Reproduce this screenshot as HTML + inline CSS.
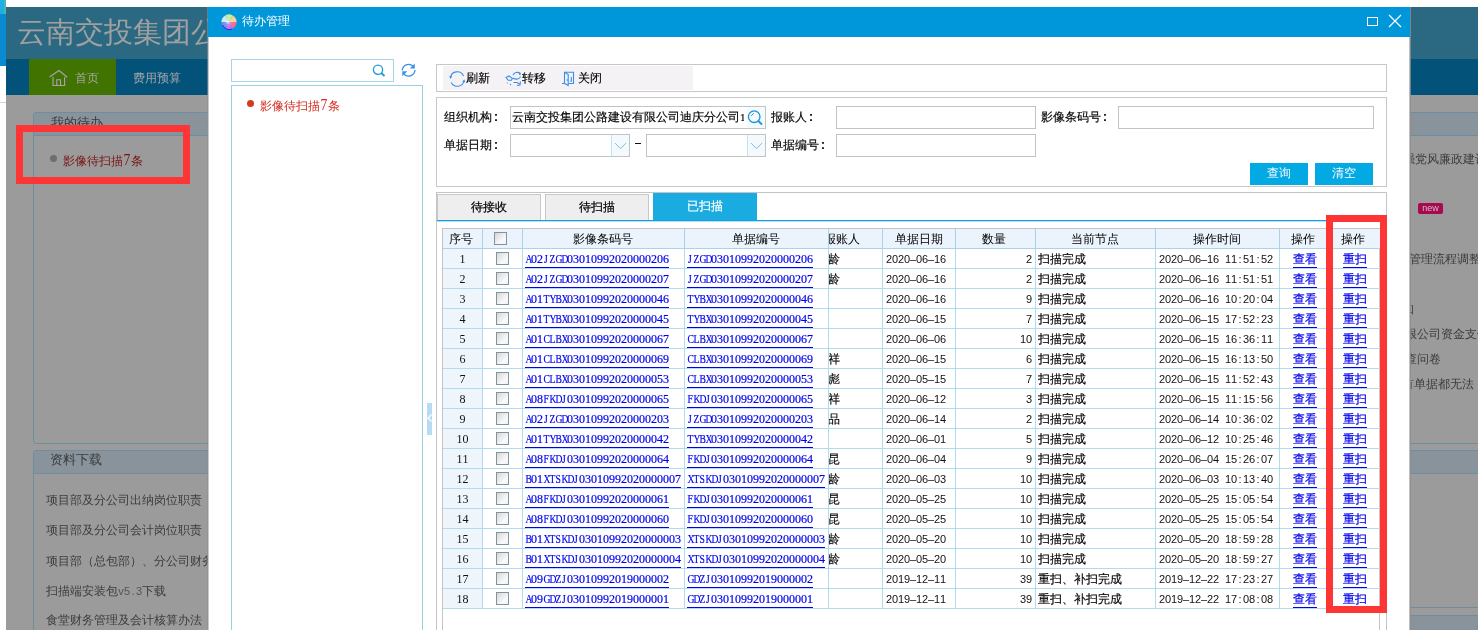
<!DOCTYPE html>
<html><head><meta charset="utf-8">
<style>
*{box-sizing:border-box}
html,body{margin:0;padding:0}
body{width:1478px;height:630px;overflow:hidden;position:relative;background:#fff;font-family:"Liberation Sans",sans-serif;font-size:12px;color:#000}
.a{position:absolute}
/* background page */
.hdr{left:6px;top:7px;width:1472px;height:52px;background:#2b6982}
.ttl{left:17px;top:12px;font-size:29px;color:#a0a0a0;white-space:nowrap;line-height:40px}
.nav{left:6px;top:59px;width:1472px;height:36px;background:#02527a}
.navg{left:29px;top:59px;width:87px;height:36px;background:#417300}
.gray{left:6px;top:95px;width:1472px;height:535px;background:#9b9b9b}
.pnl{border:1px solid #6e8da1;border-radius:3px}
.ph{left:0;top:0;right:0;height:23px;background:#89939b;border-bottom:1px solid #6e8da1;border-radius:3px 3px 0 0}
.dt{color:#3c3c3c;font-size:12px;white-space:nowrap;line-height:16px}
/* modal */
.modal{left:208px;top:7px;width:1202px;height:640px;background:#fff;border-left:1px solid #c8c8c8;border-right:1px solid #c0c0c0;box-shadow:1px 0 0 rgba(141,141,141,.8),-1px 0 0 rgba(141,141,141,.6)}
.mt{left:-1px;top:0;width:1202px;height:30px;background:#0097da}
.inp{border:1px solid #c3c3c3;background:#fff}
.lbl{white-space:nowrap;line-height:14px;font-size:12px;-webkit-text-stroke-width:0.15px}
.co{display:inline-block;width:6px;text-align:right;font-weight:bold;font-size:12px}
.btn{background:#03a9e2;color:#fff;text-align:center;line-height:20px;font-size:12px}
.tab{-webkit-text-stroke-width:0.2px;background:#eeeeee;border:1px solid #c8c8c8;border-bottom:none;text-align:center;font-size:12px;line-height:24px}
/* grid */
.grid{left:442px;top:228px;width:938px;height:420px;border-left:1px solid #c4c4c4;border-right:1px solid #c4c4c4}
.gtop{left:442px;top:228px;width:938px;height:1px;background:#c4c4c4}
.hrow{position:absolute;left:0;top:0;width:938px;height:20px;background:#ebf4fc}
.brow{position:absolute;left:0;width:938px;height:20px}
.hc,.bc{position:absolute;top:0;height:20px;border-right:1px solid #b3dbef;border-bottom:1px solid #b3dbef;white-space:nowrap;overflow:hidden;line-height:19px;font-size:12px}
.hc{text-align:center;border-color:#aad3ea;padding-right:4px;line-height:21px}
.c0{background:#eef6fc}
.hc.c0{background:transparent}
.num{text-align:center}
.c1{text-align:center}
.cb{display:inline-block;width:13px;height:13px;border:1px solid #80939e;background:linear-gradient(135deg,#d6d6d6,#fbfbfb 70%,#f0f0f0);vertical-align:top;margin-top:3px}
.ds,.cs,.ns{display:inline-block;vertical-align:top;height:19px;white-space:nowrap}
.ds i,.cs i,.ns i{display:inline-block;width:6px;text-align:center;font-style:normal;vertical-align:top}
.ds i{font-family:"Liberation Sans",sans-serif;font-size:11px;line-height:20px;color:#111}
.ns i{font-family:"Liberation Serif",serif;font-size:12px;line-height:20px;color:#111}
.cs{color:#0000f0;border-bottom:1px solid #0000f0;height:19px}
.cs i{font-family:"Liberation Serif",serif;font-size:12px;line-height:20px;height:18px;-webkit-text-stroke:0.2px #0000f0}
.cs i.w{transform:scaleX(.8)}
.lk{color:#0000f0;display:inline-block;vertical-align:top;height:19px;border-bottom:1px solid #0000f0;line-height:21px;-webkit-text-stroke:0.2px #0000f0}
.node,.pn{line-height:21px;-webkit-text-stroke-width:0.15px}
.c2,.c3,.c7{padding-left:2px}.c5,.c8{padding-left:3px}
.qty{text-align:right;padding-right:3px}
.op{text-align:center}
.pn{position:relative;left:-1px}
.red{border:7px solid #fd3535}
i.q{display:inline-block;width:6px;text-align:center;font-style:normal;font-family:"Liberation Sans",sans-serif;font-size:11px}
</style></head><body><div class="a" style="left:0;top:0;width:1478px;height:630px;overflow:hidden;will-change:transform">
<!-- left strip -->
<div class="a" style="left:0;top:0;width:4px;height:14px;background:#1eaee6"></div>
<div class="a" style="left:4px;top:0;width:2px;height:14px;background:#4fb3b0"></div>
<div class="a" style="left:0;top:14px;width:6px;height:52px;background:#0a8ad0"></div>
<div class="a" style="left:0;top:102px;width:6px;height:1px;background:#d8d8d8"></div>

<div class="a hdr"></div>
<div class="a ttl">云南交投集团公路建设有限公司</div>
<div class="a nav"></div>
<div class="a navg"></div>
<svg class="a" style="left:48px;top:69px" width="21" height="18" viewBox="0 0 21 18"><path d="M1.5 8 L11 1.5 L19.2 8.2 M5 8 V16.5 H16.6 V8 M8.8 16.5 V10.8 H12.5 V16.5" fill="none" stroke="#aaa4b0" stroke-width="1.1"/></svg>
<div class="a" style="left:75px;top:71px;color:#a6a6a6;font-size:12px;line-height:14px">首页</div>
<div class="a" style="left:133px;top:71px;color:#a6a6a6;font-size:12px;line-height:14px">费用预算</div>
<div class="a gray"></div>

<!-- left panels -->
<div class="a pnl" style="left:33px;top:112px;width:700px;height:332px"><div class="a ph"></div></div>
<div class="a" style="left:51px;top:115px;color:#3a3a3a;font-size:13px;line-height:16px">我的待办</div>
<div class="a" style="left:50px;top:155px;width:7px;height:7px;border-radius:50%;background:#6e6e6e"></div>
<div class="a" style="left:63px;top:153px;color:#7a1414;font-size:12px;line-height:16px;white-space:nowrap">影像待扫描<span style="display:inline-block;font-family:'Liberation Serif',serif;font-size:16px;line-height:10px;transform:scale(.85,1.1);transform-origin:50% 100%">7</span>条</div>

<div class="a pnl" style="left:33px;top:450px;width:700px;height:300px"><div class="a ph"></div></div>
<div class="a" style="left:50px;top:452px;color:#3a3a3a;font-size:13px;line-height:16px">资料下载</div>
<div class="a dt" style="left:46px;top:492px">项目部及分公司出纳岗位职责</div>
<div class="a dt" style="left:46px;top:522px">项目部及分公司会计岗位职责</div>
<div class="a dt" style="left:46px;top:553px">项目部（总包部）、分公司财务</div>
<div class="a dt" style="left:46px;top:583px">扫描端安装包<span style="display:inline-block;color:#4c5660"><i class="q">v</i><i class="q">5</i><i class="q">.</i><i class="q">3</i></span>下载</div>
<div class="a dt" style="left:46px;top:612px">食堂财务管理及会计核算办法</div>

<!-- right panels -->
<div class="a pnl" style="left:1000px;top:112px;width:600px;height:332px"><div class="a ph"></div></div>
<div class="a pnl" style="left:1000px;top:450px;width:600px;height:158px"><div class="a ph"></div></div>
<div class="a pnl" style="left:1000px;top:615px;width:600px;height:100px"><div class="a ph"></div></div>
<div class="a dt" style="left:1391px;top:151px">加强党风廉政建设</div>
<div class="a" style="left:1418px;top:203px;width:25px;height:11px;background:#a8094f;border-radius:2px;color:#c4c4c4;font-size:9px;line-height:11px;text-align:center">new</div>
<div class="a dt" style="left:1409px;top:251px">管理流程调整</div>
<div class="a dt" style="left:1402px;top:301px">知</div>
<div class="a dt" style="left:1393px;top:326px">有限公司资金支付</div>
<div class="a dt" style="left:1393px;top:351px">调查问卷</div>
<div class="a dt" style="left:1390px;top:376px">所有单据都无法</div>

<!-- modal -->
<div class="a modal">
  <div class="a mt"></div>
</div>
<svg class="a" style="left:221px;top:14px" width="16" height="16" viewBox="0 0 16 16"><defs><radialGradient id="gw" cx="50%" cy="50%" r="50%"><stop offset="0" stop-color="#fff" stop-opacity=".85"/><stop offset=".45" stop-color="#fff" stop-opacity=".15"/><stop offset="1" stop-color="#fff" stop-opacity="0"/></radialGradient></defs><path d="M8 8 L0.40 8.00 A7.6 7.6 0 0 1 4.20 1.42 Z" fill="#c8ecf4"/><path d="M8 8 L4.20 1.42 A7.6 7.6 0 0 1 11.80 1.42 Z" fill="#bdf0a0"/><path d="M8 8 L11.80 1.42 A7.6 7.6 0 0 1 15.60 8.00 Z" fill="#f5d590"/><path d="M8 8 L15.60 8.00 A7.6 7.6 0 0 1 11.80 14.58 Z" fill="#f26aa8"/><path d="M8 8 L11.80 14.58 A7.6 7.6 0 0 1 4.20 14.58 Z" fill="#c070f0"/><path d="M8 8 L4.20 14.58 A7.6 7.6 0 0 1 0.40 8.00 Z" fill="#7088f0"/><circle cx="7" cy="8" r="6" fill="url(#gw)"/><path d="M1.5 11 A7.4 7.4 0 0 0 11 15.2" fill="none" stroke="#2a2ae0" stroke-width="1"/></svg>
<div class="a" style="left:242px;top:13px;color:#fff;font-size:12px;line-height:16px">待办管理</div>
<div class="a" style="left:1367px;top:17px;width:11px;height:9px;border:1.5px solid #fff"></div>
<svg class="a" style="left:1388px;top:14px" width="14" height="14" viewBox="0 0 14 14"><path d="M1 1 L13 13 M13 1 L1 13" stroke="#fff" stroke-width="1.3"/></svg>

<!-- left of modal -->
<div class="a" style="left:231px;top:59px;width:163px;height:23px;border:1px solid #a8d4e6"></div>
<svg class="a" style="left:371px;top:63px" width="16" height="16" viewBox="0 0 16 16"><circle cx="7" cy="6.7" r="4.6" fill="none" stroke="#1b9bd8" stroke-width="1.3"/><path d="M10.2 10 L13.5 13" stroke="#1b9bd8" stroke-width="1.8"/></svg>
<svg class="a" style="left:400px;top:62px" width="17" height="16" viewBox="0 0 17 16"><path d="M2.2 8.5 A6.5 6.5 0 0 1 13 4" fill="none" stroke="#3b8fe8" stroke-width="1.3"/><path d="M14.8 1.6 L14.8 6.6 L9.8 6.6 Z" fill="#3b8fe8"/><path d="M15 8 A6.5 6.5 0 0 1 4 12.3" fill="none" stroke="#3b8fe8" stroke-width="1.3"/><path d="M2.3 14.3 L2.3 9.3 L7.3 9.3 Z" fill="#3b8fe8"/></svg>
<div class="a" style="left:231px;top:85px;width:192px;height:600px;border:1px solid #9ad1e2"></div>
<div class="a" style="left:247px;top:100px;width:7px;height:7px;border-radius:50%;background:#d63a1c"></div>
<div class="a" style="left:260px;top:98px;color:#d42a1f;font-size:12px;line-height:16px;white-space:nowrap">影像待扫描<span style="display:inline-block;font-family:'Liberation Serif',serif;font-size:16px;line-height:10px;transform:scale(.85,1.1);transform-origin:50% 100%">7</span>条</div>
<div class="a" style="left:427px;top:403px;width:5px;height:32px;background:#b6dcf3"></div>
<svg class="a" style="left:427px;top:413px" width="5" height="10" viewBox="0 0 5 10"><path d="M4.5 1.5 L1 5 L4.5 8.5" fill="none" stroke="#fff" stroke-width="1.2"/></svg>

<!-- toolbar -->
<div class="a" style="left:436px;top:64px;width:951px;height:28px;border:1px solid #c8c8c8"></div>
<div class="a" style="left:443px;top:66px;width:250px;height:24px;background:#f4f2f4"></div>
<svg class="a" style="left:449px;top:71px" width="17" height="17" viewBox="0 0 17 17"><g fill="none" stroke="#3a8ee8" stroke-width="1.1"><path d="M1.5 6.5 A6.8 6.8 0 0 1 14.5 5"/><path d="M15 9.5 A6.8 6.8 0 0 1 2.2 11.5"/></g><path d="M0.3 5 L3.2 5.2 L1.4 8 Z" fill="#3a8ee8"/><path d="M16.2 11.2 L13.3 11 L15.2 8.2 Z" fill="#3a8ee8"/></svg>
<div class="a lbl" style="left:466px;top:71px">刷新</div>
<svg class="a" style="left:502px;top:68px" width="22" height="20" viewBox="0 0 22 20"><g fill="none" stroke="#3a8ee8" stroke-width="1.1"><path d="M11 7 C12 4.5 16 3.5 18.5 5.5"/><path d="M18.5 8.5 C18 11 14 12 11 10"/><path d="M4 9.5 L7 8 L10.5 10.5 L9 12.5 L6 12 Z"/><path d="M11.5 14.5 L15 14.5 L17.5 16 M15 17.5 L18 17 L18.5 13.5"/></g><circle cx="17.8" cy="6" r="1" fill="#3a8ee8"/><circle cx="5.2" cy="15" r=".6" fill="#3a8ee8"/><circle cx="8.5" cy="16.5" r=".7" fill="#3a8ee8"/></svg>
<div class="a lbl" style="left:522px;top:71px">转移</div>
<svg class="a" style="left:558px;top:68px" width="20" height="20" viewBox="0 0 20 20"><g fill="none" stroke="#3a8ee8" stroke-width="1.1"><path d="M6.5 15.5 V4.2 H15.5 V15.5 H10.5"/><path d="M6.8 4.5 L10.2 6.5 V17.5 L6.8 15.5"/><path d="M4 15.5 H6.8"/><path d="M13.3 9 V13.3 H12.2"/></g><circle cx="9.3" cy="12" r=".8" fill="#3a8ee8"/></svg>
<div class="a lbl" style="left:578px;top:71px">关闭</div>

<!-- form -->
<div class="a" style="left:436px;top:97px;width:951px;height:90px;border:1px solid #c8c8c8"></div>
<div class="a lbl" style="left:444px;top:110px">组织机构<b class="co">:</b></div>
<div class="a lbl" style="left:444px;top:138px">单据日期<b class="co">:</b></div>
<div class="a lbl" style="left:771px;top:110px">报账人<b class="co">:</b></div>
<div class="a lbl" style="left:771px;top:138px">单据编号<b class="co">:</b></div>
<div class="a lbl" style="left:1041px;top:110px">影像条码号<b class="co">:</b></div>
<div class="a inp" style="left:510px;top:106px;width:256px;height:23px"></div>
<div class="a lbl" style="left:512px;top:110px;width:232px;overflow:hidden">云南交投集团公路建设有限公司迪庆分公司<span style="font-family:'Liberation Serif',serif;font-size:11px;color:#000">1</span></div>
<div class="a" style="left:747px;top:107px;width:18px;height:21px;background:#f5fafd"></div><svg class="a" style="left:746px;top:109px" width="18" height="18" viewBox="0 0 18 18"><circle cx="8.2" cy="7.7" r="5.8" fill="none" stroke="#1a93d8" stroke-width="1.3"/><path d="M12.4 12 L16 15.6" stroke="#1a93d8" stroke-width="1.9"/><path d="M5.2 6.8 L7.6 4.4" stroke="#1a93d8" stroke-width="1"/></svg>
<div class="a inp" style="left:836px;top:106px;width:200px;height:23px"></div>
<div class="a inp" style="left:1118px;top:106px;width:256px;height:23px"></div>
<div class="a inp" style="left:510px;top:134px;width:120px;height:23px"></div>
<div class="a" style="left:611px;top:135px;width:18px;height:21px;background:#f4f9fd;border-left:1px solid #bfe4f8"></div>
<svg class="a" style="left:613px;top:140px" width="14" height="10" viewBox="0 0 14 10"><path d="M2 3.1 L7.5 8.7 L13 3.1" fill="none" stroke="#7dbcd8" stroke-width="1"/></svg>
<div class="a" style="left:635px;top:143px;width:6px;height:1px;background:#111"></div>
<div class="a inp" style="left:646px;top:134px;width:120px;height:23px"></div>
<div class="a" style="left:747px;top:135px;width:18px;height:21px;background:#f4f9fd;border-left:1px solid #bfe4f8"></div>
<svg class="a" style="left:749px;top:140px" width="14" height="10" viewBox="0 0 14 10"><path d="M2 3.1 L7.5 8.7 L13 3.1" fill="none" stroke="#7dbcd8" stroke-width="1"/></svg>
<div class="a inp" style="left:836px;top:134px;width:200px;height:23px"></div>
<div class="a btn" style="left:1250px;top:163px;width:58px;height:22px">查询</div>
<div class="a btn" style="left:1315px;top:163px;width:58px;height:22px">清空</div>

<!-- tabs -->
<div class="a" style="left:436px;top:192px;width:951px;height:1px;background:#c4c4c4"></div>
<div class="a" style="left:436px;top:192px;width:1px;height:460px;background:#c4c4c4"></div>
<div class="a" style="left:1386px;top:192px;width:1px;height:460px;background:#c4c4c4"></div>
<div class="a tab" style="left:437px;top:194px;width:104px;height:26px">待接收</div>
<div class="a tab" style="left:545px;top:194px;width:104px;height:26px">待扫描</div>
<div class="a tab" style="left:653px;top:193px;width:104px;height:27px;background:#1aabe1;border:none;color:#fff;line-height:26px">已扫描</div>
<div class="a" style="left:437px;top:220px;width:949px;height:1px;background:#14a0dc"></div><div class="a" style="left:437px;top:221px;width:949px;height:1px;background:#b5e2f6"></div>

<!-- grid -->
<div class="a grid"></div>
<div class="a gtop"></div>
<div class="a" style="left:443px;top:229px;width:937px;height:400px;overflow:hidden">
<div class="hrow"><div class="hc c0" style="left:0px;width:40px">序号</div><div class="hc c1" style="left:40px;width:40px"><span class="cb"></span></div><div class="hc c2" style="left:80px;width:162px">影像条码号</div><div class="hc c3" style="left:242px;width:144px">单据编号</div><div class="hc c4" style="left:386px;width:54px"><span style="position:absolute;left:-5px;top:0">报账人</span></div><div class="hc c5" style="left:440px;width:73px">单据日期</div><div class="hc c6" style="left:513px;width:80px">数量</div><div class="hc c7" style="left:593px;width:120px">当前节点</div><div class="hc c8" style="left:713px;width:124px">操作时间</div><div class="hc c9" style="left:837px;width:50px">操作</div><div class="hc c10" style="left:887px;width:51px">操作</div></div>
<div class="brow" style="top:20px"><div class="bc c0 num" style="left:0px;width:40px"><span class="ns"><i>1</i></span></div><div class="bc c1" style="left:40px;width:40px"><span class="cb"></span></div><div class="bc c2" style="left:80px;width:162px"><span class="cs"><i class="w">A</i><i>0</i><i>2</i><i class="w">J</i><i class="w">Z</i><i class="w">G</i><i class="w">D</i><i>0</i><i>3</i><i>0</i><i>1</i><i>0</i><i>9</i><i>9</i><i>2</i><i>0</i><i>2</i><i>0</i><i>0</i><i>0</i><i>0</i><i>2</i><i>0</i><i>6</i></span></div><div class="bc c3" style="left:242px;width:144px"><span class="cs"><i class="w">J</i><i class="w">Z</i><i class="w">G</i><i class="w">D</i><i>0</i><i>3</i><i>0</i><i>1</i><i>0</i><i>9</i><i>9</i><i>2</i><i>0</i><i>2</i><i>0</i><i>0</i><i>0</i><i>0</i><i>2</i><i>0</i><i>6</i></span></div><div class="bc c4" style="left:386px;width:54px"><span class="pn">龄</span></div><div class="bc c5" style="left:440px;width:73px"><span class="ds"><i>2</i><i>0</i><i>2</i><i>0</i><i>&ndash;</i><i>0</i><i>6</i><i>&ndash;</i><i>1</i><i>6</i></span></div><div class="bc c6 qty" style="left:513px;width:80px"><span class="ds"><i>2</i></span></div><div class="bc c7 node" style="left:593px;width:120px">扫描完成</div><div class="bc c8" style="left:713px;width:124px"><span class="ds"><i>2</i><i>0</i><i>2</i><i>0</i><i>&ndash;</i><i>0</i><i>6</i><i>&ndash;</i><i>1</i><i>6</i><i>&nbsp;</i><i>1</i><i>1</i><i>:</i><i>5</i><i>1</i><i>:</i><i>5</i><i>2</i></span></div><div class="bc c9 op" style="left:837px;width:50px"><span class="lk">查看</span></div><div class="bc c10 op" style="left:887px;width:51px"><span class="lk">重扫</span></div></div>
<div class="brow" style="top:40px"><div class="bc c0 num" style="left:0px;width:40px"><span class="ns"><i>2</i></span></div><div class="bc c1" style="left:40px;width:40px"><span class="cb"></span></div><div class="bc c2" style="left:80px;width:162px"><span class="cs"><i class="w">A</i><i>0</i><i>2</i><i class="w">J</i><i class="w">Z</i><i class="w">G</i><i class="w">D</i><i>0</i><i>3</i><i>0</i><i>1</i><i>0</i><i>9</i><i>9</i><i>2</i><i>0</i><i>2</i><i>0</i><i>0</i><i>0</i><i>0</i><i>2</i><i>0</i><i>7</i></span></div><div class="bc c3" style="left:242px;width:144px"><span class="cs"><i class="w">J</i><i class="w">Z</i><i class="w">G</i><i class="w">D</i><i>0</i><i>3</i><i>0</i><i>1</i><i>0</i><i>9</i><i>9</i><i>2</i><i>0</i><i>2</i><i>0</i><i>0</i><i>0</i><i>0</i><i>2</i><i>0</i><i>7</i></span></div><div class="bc c4" style="left:386px;width:54px"><span class="pn">龄</span></div><div class="bc c5" style="left:440px;width:73px"><span class="ds"><i>2</i><i>0</i><i>2</i><i>0</i><i>&ndash;</i><i>0</i><i>6</i><i>&ndash;</i><i>1</i><i>6</i></span></div><div class="bc c6 qty" style="left:513px;width:80px"><span class="ds"><i>2</i></span></div><div class="bc c7 node" style="left:593px;width:120px">扫描完成</div><div class="bc c8" style="left:713px;width:124px"><span class="ds"><i>2</i><i>0</i><i>2</i><i>0</i><i>&ndash;</i><i>0</i><i>6</i><i>&ndash;</i><i>1</i><i>6</i><i>&nbsp;</i><i>1</i><i>1</i><i>:</i><i>5</i><i>1</i><i>:</i><i>5</i><i>1</i></span></div><div class="bc c9 op" style="left:837px;width:50px"><span class="lk">查看</span></div><div class="bc c10 op" style="left:887px;width:51px"><span class="lk">重扫</span></div></div>
<div class="brow" style="top:60px"><div class="bc c0 num" style="left:0px;width:40px"><span class="ns"><i>3</i></span></div><div class="bc c1" style="left:40px;width:40px"><span class="cb"></span></div><div class="bc c2" style="left:80px;width:162px"><span class="cs"><i class="w">A</i><i>0</i><i>1</i><i class="w">T</i><i class="w">Y</i><i class="w">B</i><i class="w">X</i><i>0</i><i>3</i><i>0</i><i>1</i><i>0</i><i>9</i><i>9</i><i>2</i><i>0</i><i>2</i><i>0</i><i>0</i><i>0</i><i>0</i><i>0</i><i>4</i><i>6</i></span></div><div class="bc c3" style="left:242px;width:144px"><span class="cs"><i class="w">T</i><i class="w">Y</i><i class="w">B</i><i class="w">X</i><i>0</i><i>3</i><i>0</i><i>1</i><i>0</i><i>9</i><i>9</i><i>2</i><i>0</i><i>2</i><i>0</i><i>0</i><i>0</i><i>0</i><i>0</i><i>4</i><i>6</i></span></div><div class="bc c4" style="left:386px;width:54px"><span class="pn"></span></div><div class="bc c5" style="left:440px;width:73px"><span class="ds"><i>2</i><i>0</i><i>2</i><i>0</i><i>&ndash;</i><i>0</i><i>6</i><i>&ndash;</i><i>1</i><i>6</i></span></div><div class="bc c6 qty" style="left:513px;width:80px"><span class="ds"><i>9</i></span></div><div class="bc c7 node" style="left:593px;width:120px">扫描完成</div><div class="bc c8" style="left:713px;width:124px"><span class="ds"><i>2</i><i>0</i><i>2</i><i>0</i><i>&ndash;</i><i>0</i><i>6</i><i>&ndash;</i><i>1</i><i>6</i><i>&nbsp;</i><i>1</i><i>0</i><i>:</i><i>2</i><i>0</i><i>:</i><i>0</i><i>4</i></span></div><div class="bc c9 op" style="left:837px;width:50px"><span class="lk">查看</span></div><div class="bc c10 op" style="left:887px;width:51px"><span class="lk">重扫</span></div></div>
<div class="brow" style="top:80px"><div class="bc c0 num" style="left:0px;width:40px"><span class="ns"><i>4</i></span></div><div class="bc c1" style="left:40px;width:40px"><span class="cb"></span></div><div class="bc c2" style="left:80px;width:162px"><span class="cs"><i class="w">A</i><i>0</i><i>1</i><i class="w">T</i><i class="w">Y</i><i class="w">B</i><i class="w">X</i><i>0</i><i>3</i><i>0</i><i>1</i><i>0</i><i>9</i><i>9</i><i>2</i><i>0</i><i>2</i><i>0</i><i>0</i><i>0</i><i>0</i><i>0</i><i>4</i><i>5</i></span></div><div class="bc c3" style="left:242px;width:144px"><span class="cs"><i class="w">T</i><i class="w">Y</i><i class="w">B</i><i class="w">X</i><i>0</i><i>3</i><i>0</i><i>1</i><i>0</i><i>9</i><i>9</i><i>2</i><i>0</i><i>2</i><i>0</i><i>0</i><i>0</i><i>0</i><i>0</i><i>4</i><i>5</i></span></div><div class="bc c4" style="left:386px;width:54px"><span class="pn"></span></div><div class="bc c5" style="left:440px;width:73px"><span class="ds"><i>2</i><i>0</i><i>2</i><i>0</i><i>&ndash;</i><i>0</i><i>6</i><i>&ndash;</i><i>1</i><i>5</i></span></div><div class="bc c6 qty" style="left:513px;width:80px"><span class="ds"><i>7</i></span></div><div class="bc c7 node" style="left:593px;width:120px">扫描完成</div><div class="bc c8" style="left:713px;width:124px"><span class="ds"><i>2</i><i>0</i><i>2</i><i>0</i><i>&ndash;</i><i>0</i><i>6</i><i>&ndash;</i><i>1</i><i>5</i><i>&nbsp;</i><i>1</i><i>7</i><i>:</i><i>5</i><i>2</i><i>:</i><i>2</i><i>3</i></span></div><div class="bc c9 op" style="left:837px;width:50px"><span class="lk">查看</span></div><div class="bc c10 op" style="left:887px;width:51px"><span class="lk">重扫</span></div></div>
<div class="brow" style="top:100px"><div class="bc c0 num" style="left:0px;width:40px"><span class="ns"><i>5</i></span></div><div class="bc c1" style="left:40px;width:40px"><span class="cb"></span></div><div class="bc c2" style="left:80px;width:162px"><span class="cs"><i class="w">A</i><i>0</i><i>1</i><i class="w">C</i><i class="w">L</i><i class="w">B</i><i class="w">X</i><i>0</i><i>3</i><i>0</i><i>1</i><i>0</i><i>9</i><i>9</i><i>2</i><i>0</i><i>2</i><i>0</i><i>0</i><i>0</i><i>0</i><i>0</i><i>6</i><i>7</i></span></div><div class="bc c3" style="left:242px;width:144px"><span class="cs"><i class="w">C</i><i class="w">L</i><i class="w">B</i><i class="w">X</i><i>0</i><i>3</i><i>0</i><i>1</i><i>0</i><i>9</i><i>9</i><i>2</i><i>0</i><i>2</i><i>0</i><i>0</i><i>0</i><i>0</i><i>0</i><i>6</i><i>7</i></span></div><div class="bc c4" style="left:386px;width:54px"><span class="pn"></span></div><div class="bc c5" style="left:440px;width:73px"><span class="ds"><i>2</i><i>0</i><i>2</i><i>0</i><i>&ndash;</i><i>0</i><i>6</i><i>&ndash;</i><i>0</i><i>6</i></span></div><div class="bc c6 qty" style="left:513px;width:80px"><span class="ds"><i>1</i><i>0</i></span></div><div class="bc c7 node" style="left:593px;width:120px">扫描完成</div><div class="bc c8" style="left:713px;width:124px"><span class="ds"><i>2</i><i>0</i><i>2</i><i>0</i><i>&ndash;</i><i>0</i><i>6</i><i>&ndash;</i><i>1</i><i>5</i><i>&nbsp;</i><i>1</i><i>6</i><i>:</i><i>3</i><i>6</i><i>:</i><i>1</i><i>1</i></span></div><div class="bc c9 op" style="left:837px;width:50px"><span class="lk">查看</span></div><div class="bc c10 op" style="left:887px;width:51px"><span class="lk">重扫</span></div></div>
<div class="brow" style="top:120px"><div class="bc c0 num" style="left:0px;width:40px"><span class="ns"><i>6</i></span></div><div class="bc c1" style="left:40px;width:40px"><span class="cb"></span></div><div class="bc c2" style="left:80px;width:162px"><span class="cs"><i class="w">A</i><i>0</i><i>1</i><i class="w">C</i><i class="w">L</i><i class="w">B</i><i class="w">X</i><i>0</i><i>3</i><i>0</i><i>1</i><i>0</i><i>9</i><i>9</i><i>2</i><i>0</i><i>2</i><i>0</i><i>0</i><i>0</i><i>0</i><i>0</i><i>6</i><i>9</i></span></div><div class="bc c3" style="left:242px;width:144px"><span class="cs"><i class="w">C</i><i class="w">L</i><i class="w">B</i><i class="w">X</i><i>0</i><i>3</i><i>0</i><i>1</i><i>0</i><i>9</i><i>9</i><i>2</i><i>0</i><i>2</i><i>0</i><i>0</i><i>0</i><i>0</i><i>0</i><i>6</i><i>9</i></span></div><div class="bc c4" style="left:386px;width:54px"><span class="pn">祥</span></div><div class="bc c5" style="left:440px;width:73px"><span class="ds"><i>2</i><i>0</i><i>2</i><i>0</i><i>&ndash;</i><i>0</i><i>6</i><i>&ndash;</i><i>1</i><i>5</i></span></div><div class="bc c6 qty" style="left:513px;width:80px"><span class="ds"><i>6</i></span></div><div class="bc c7 node" style="left:593px;width:120px">扫描完成</div><div class="bc c8" style="left:713px;width:124px"><span class="ds"><i>2</i><i>0</i><i>2</i><i>0</i><i>&ndash;</i><i>0</i><i>6</i><i>&ndash;</i><i>1</i><i>5</i><i>&nbsp;</i><i>1</i><i>6</i><i>:</i><i>1</i><i>3</i><i>:</i><i>5</i><i>0</i></span></div><div class="bc c9 op" style="left:837px;width:50px"><span class="lk">查看</span></div><div class="bc c10 op" style="left:887px;width:51px"><span class="lk">重扫</span></div></div>
<div class="brow" style="top:140px"><div class="bc c0 num" style="left:0px;width:40px"><span class="ns"><i>7</i></span></div><div class="bc c1" style="left:40px;width:40px"><span class="cb"></span></div><div class="bc c2" style="left:80px;width:162px"><span class="cs"><i class="w">A</i><i>0</i><i>1</i><i class="w">C</i><i class="w">L</i><i class="w">B</i><i class="w">X</i><i>0</i><i>3</i><i>0</i><i>1</i><i>0</i><i>9</i><i>9</i><i>2</i><i>0</i><i>2</i><i>0</i><i>0</i><i>0</i><i>0</i><i>0</i><i>5</i><i>3</i></span></div><div class="bc c3" style="left:242px;width:144px"><span class="cs"><i class="w">C</i><i class="w">L</i><i class="w">B</i><i class="w">X</i><i>0</i><i>3</i><i>0</i><i>1</i><i>0</i><i>9</i><i>9</i><i>2</i><i>0</i><i>2</i><i>0</i><i>0</i><i>0</i><i>0</i><i>0</i><i>5</i><i>3</i></span></div><div class="bc c4" style="left:386px;width:54px"><span class="pn">彪</span></div><div class="bc c5" style="left:440px;width:73px"><span class="ds"><i>2</i><i>0</i><i>2</i><i>0</i><i>&ndash;</i><i>0</i><i>5</i><i>&ndash;</i><i>1</i><i>5</i></span></div><div class="bc c6 qty" style="left:513px;width:80px"><span class="ds"><i>7</i></span></div><div class="bc c7 node" style="left:593px;width:120px">扫描完成</div><div class="bc c8" style="left:713px;width:124px"><span class="ds"><i>2</i><i>0</i><i>2</i><i>0</i><i>&ndash;</i><i>0</i><i>6</i><i>&ndash;</i><i>1</i><i>5</i><i>&nbsp;</i><i>1</i><i>1</i><i>:</i><i>5</i><i>2</i><i>:</i><i>4</i><i>3</i></span></div><div class="bc c9 op" style="left:837px;width:50px"><span class="lk">查看</span></div><div class="bc c10 op" style="left:887px;width:51px"><span class="lk">重扫</span></div></div>
<div class="brow" style="top:160px"><div class="bc c0 num" style="left:0px;width:40px"><span class="ns"><i>8</i></span></div><div class="bc c1" style="left:40px;width:40px"><span class="cb"></span></div><div class="bc c2" style="left:80px;width:162px"><span class="cs"><i class="w">A</i><i>0</i><i>8</i><i class="w">F</i><i class="w">K</i><i class="w">D</i><i class="w">J</i><i>0</i><i>3</i><i>0</i><i>1</i><i>0</i><i>9</i><i>9</i><i>2</i><i>0</i><i>2</i><i>0</i><i>0</i><i>0</i><i>0</i><i>0</i><i>6</i><i>5</i></span></div><div class="bc c3" style="left:242px;width:144px"><span class="cs"><i class="w">F</i><i class="w">K</i><i class="w">D</i><i class="w">J</i><i>0</i><i>3</i><i>0</i><i>1</i><i>0</i><i>9</i><i>9</i><i>2</i><i>0</i><i>2</i><i>0</i><i>0</i><i>0</i><i>0</i><i>0</i><i>6</i><i>5</i></span></div><div class="bc c4" style="left:386px;width:54px"><span class="pn">祥</span></div><div class="bc c5" style="left:440px;width:73px"><span class="ds"><i>2</i><i>0</i><i>2</i><i>0</i><i>&ndash;</i><i>0</i><i>6</i><i>&ndash;</i><i>1</i><i>2</i></span></div><div class="bc c6 qty" style="left:513px;width:80px"><span class="ds"><i>3</i></span></div><div class="bc c7 node" style="left:593px;width:120px">扫描完成</div><div class="bc c8" style="left:713px;width:124px"><span class="ds"><i>2</i><i>0</i><i>2</i><i>0</i><i>&ndash;</i><i>0</i><i>6</i><i>&ndash;</i><i>1</i><i>5</i><i>&nbsp;</i><i>1</i><i>1</i><i>:</i><i>1</i><i>5</i><i>:</i><i>5</i><i>6</i></span></div><div class="bc c9 op" style="left:837px;width:50px"><span class="lk">查看</span></div><div class="bc c10 op" style="left:887px;width:51px"><span class="lk">重扫</span></div></div>
<div class="brow" style="top:180px"><div class="bc c0 num" style="left:0px;width:40px"><span class="ns"><i>9</i></span></div><div class="bc c1" style="left:40px;width:40px"><span class="cb"></span></div><div class="bc c2" style="left:80px;width:162px"><span class="cs"><i class="w">A</i><i>0</i><i>2</i><i class="w">J</i><i class="w">Z</i><i class="w">G</i><i class="w">D</i><i>0</i><i>3</i><i>0</i><i>1</i><i>0</i><i>9</i><i>9</i><i>2</i><i>0</i><i>2</i><i>0</i><i>0</i><i>0</i><i>0</i><i>2</i><i>0</i><i>3</i></span></div><div class="bc c3" style="left:242px;width:144px"><span class="cs"><i class="w">J</i><i class="w">Z</i><i class="w">G</i><i class="w">D</i><i>0</i><i>3</i><i>0</i><i>1</i><i>0</i><i>9</i><i>9</i><i>2</i><i>0</i><i>2</i><i>0</i><i>0</i><i>0</i><i>0</i><i>2</i><i>0</i><i>3</i></span></div><div class="bc c4" style="left:386px;width:54px"><span class="pn">品</span></div><div class="bc c5" style="left:440px;width:73px"><span class="ds"><i>2</i><i>0</i><i>2</i><i>0</i><i>&ndash;</i><i>0</i><i>6</i><i>&ndash;</i><i>1</i><i>4</i></span></div><div class="bc c6 qty" style="left:513px;width:80px"><span class="ds"><i>2</i></span></div><div class="bc c7 node" style="left:593px;width:120px">扫描完成</div><div class="bc c8" style="left:713px;width:124px"><span class="ds"><i>2</i><i>0</i><i>2</i><i>0</i><i>&ndash;</i><i>0</i><i>6</i><i>&ndash;</i><i>1</i><i>4</i><i>&nbsp;</i><i>1</i><i>0</i><i>:</i><i>3</i><i>6</i><i>:</i><i>0</i><i>2</i></span></div><div class="bc c9 op" style="left:837px;width:50px"><span class="lk">查看</span></div><div class="bc c10 op" style="left:887px;width:51px"><span class="lk">重扫</span></div></div>
<div class="brow" style="top:200px"><div class="bc c0 num" style="left:0px;width:40px"><span class="ns"><i>1</i><i>0</i></span></div><div class="bc c1" style="left:40px;width:40px"><span class="cb"></span></div><div class="bc c2" style="left:80px;width:162px"><span class="cs"><i class="w">A</i><i>0</i><i>1</i><i class="w">T</i><i class="w">Y</i><i class="w">B</i><i class="w">X</i><i>0</i><i>3</i><i>0</i><i>1</i><i>0</i><i>9</i><i>9</i><i>2</i><i>0</i><i>2</i><i>0</i><i>0</i><i>0</i><i>0</i><i>0</i><i>4</i><i>2</i></span></div><div class="bc c3" style="left:242px;width:144px"><span class="cs"><i class="w">T</i><i class="w">Y</i><i class="w">B</i><i class="w">X</i><i>0</i><i>3</i><i>0</i><i>1</i><i>0</i><i>9</i><i>9</i><i>2</i><i>0</i><i>2</i><i>0</i><i>0</i><i>0</i><i>0</i><i>0</i><i>4</i><i>2</i></span></div><div class="bc c4" style="left:386px;width:54px"><span class="pn"></span></div><div class="bc c5" style="left:440px;width:73px"><span class="ds"><i>2</i><i>0</i><i>2</i><i>0</i><i>&ndash;</i><i>0</i><i>6</i><i>&ndash;</i><i>0</i><i>1</i></span></div><div class="bc c6 qty" style="left:513px;width:80px"><span class="ds"><i>5</i></span></div><div class="bc c7 node" style="left:593px;width:120px">扫描完成</div><div class="bc c8" style="left:713px;width:124px"><span class="ds"><i>2</i><i>0</i><i>2</i><i>0</i><i>&ndash;</i><i>0</i><i>6</i><i>&ndash;</i><i>1</i><i>2</i><i>&nbsp;</i><i>1</i><i>0</i><i>:</i><i>2</i><i>5</i><i>:</i><i>4</i><i>6</i></span></div><div class="bc c9 op" style="left:837px;width:50px"><span class="lk">查看</span></div><div class="bc c10 op" style="left:887px;width:51px"><span class="lk">重扫</span></div></div>
<div class="brow" style="top:220px"><div class="bc c0 num" style="left:0px;width:40px"><span class="ns"><i>1</i><i>1</i></span></div><div class="bc c1" style="left:40px;width:40px"><span class="cb"></span></div><div class="bc c2" style="left:80px;width:162px"><span class="cs"><i class="w">A</i><i>0</i><i>8</i><i class="w">F</i><i class="w">K</i><i class="w">D</i><i class="w">J</i><i>0</i><i>3</i><i>0</i><i>1</i><i>0</i><i>9</i><i>9</i><i>2</i><i>0</i><i>2</i><i>0</i><i>0</i><i>0</i><i>0</i><i>0</i><i>6</i><i>4</i></span></div><div class="bc c3" style="left:242px;width:144px"><span class="cs"><i class="w">F</i><i class="w">K</i><i class="w">D</i><i class="w">J</i><i>0</i><i>3</i><i>0</i><i>1</i><i>0</i><i>9</i><i>9</i><i>2</i><i>0</i><i>2</i><i>0</i><i>0</i><i>0</i><i>0</i><i>0</i><i>6</i><i>4</i></span></div><div class="bc c4" style="left:386px;width:54px"><span class="pn">昆</span></div><div class="bc c5" style="left:440px;width:73px"><span class="ds"><i>2</i><i>0</i><i>2</i><i>0</i><i>&ndash;</i><i>0</i><i>6</i><i>&ndash;</i><i>0</i><i>4</i></span></div><div class="bc c6 qty" style="left:513px;width:80px"><span class="ds"><i>9</i></span></div><div class="bc c7 node" style="left:593px;width:120px">扫描完成</div><div class="bc c8" style="left:713px;width:124px"><span class="ds"><i>2</i><i>0</i><i>2</i><i>0</i><i>&ndash;</i><i>0</i><i>6</i><i>&ndash;</i><i>0</i><i>4</i><i>&nbsp;</i><i>1</i><i>5</i><i>:</i><i>2</i><i>6</i><i>:</i><i>0</i><i>7</i></span></div><div class="bc c9 op" style="left:837px;width:50px"><span class="lk">查看</span></div><div class="bc c10 op" style="left:887px;width:51px"><span class="lk">重扫</span></div></div>
<div class="brow" style="top:240px"><div class="bc c0 num" style="left:0px;width:40px"><span class="ns"><i>1</i><i>2</i></span></div><div class="bc c1" style="left:40px;width:40px"><span class="cb"></span></div><div class="bc c2" style="left:80px;width:162px"><span class="cs"><i class="w">B</i><i>0</i><i>1</i><i class="w">X</i><i class="w">T</i><i class="w">S</i><i class="w">K</i><i class="w">D</i><i class="w">J</i><i>0</i><i>3</i><i>0</i><i>1</i><i>0</i><i>9</i><i>9</i><i>2</i><i>0</i><i>2</i><i>0</i><i>0</i><i>0</i><i>0</i><i>0</i><i>0</i><i>7</i></span></div><div class="bc c3" style="left:242px;width:144px"><span class="cs"><i class="w">X</i><i class="w">T</i><i class="w">S</i><i class="w">K</i><i class="w">D</i><i class="w">J</i><i>0</i><i>3</i><i>0</i><i>1</i><i>0</i><i>9</i><i>9</i><i>2</i><i>0</i><i>2</i><i>0</i><i>0</i><i>0</i><i>0</i><i>0</i><i>0</i><i>7</i></span></div><div class="bc c4" style="left:386px;width:54px"><span class="pn">龄</span></div><div class="bc c5" style="left:440px;width:73px"><span class="ds"><i>2</i><i>0</i><i>2</i><i>0</i><i>&ndash;</i><i>0</i><i>6</i><i>&ndash;</i><i>0</i><i>3</i></span></div><div class="bc c6 qty" style="left:513px;width:80px"><span class="ds"><i>1</i><i>0</i></span></div><div class="bc c7 node" style="left:593px;width:120px">扫描完成</div><div class="bc c8" style="left:713px;width:124px"><span class="ds"><i>2</i><i>0</i><i>2</i><i>0</i><i>&ndash;</i><i>0</i><i>6</i><i>&ndash;</i><i>0</i><i>3</i><i>&nbsp;</i><i>1</i><i>0</i><i>:</i><i>1</i><i>3</i><i>:</i><i>4</i><i>0</i></span></div><div class="bc c9 op" style="left:837px;width:50px"><span class="lk">查看</span></div><div class="bc c10 op" style="left:887px;width:51px"><span class="lk">重扫</span></div></div>
<div class="brow" style="top:260px"><div class="bc c0 num" style="left:0px;width:40px"><span class="ns"><i>1</i><i>3</i></span></div><div class="bc c1" style="left:40px;width:40px"><span class="cb"></span></div><div class="bc c2" style="left:80px;width:162px"><span class="cs"><i class="w">A</i><i>0</i><i>8</i><i class="w">F</i><i class="w">K</i><i class="w">D</i><i class="w">J</i><i>0</i><i>3</i><i>0</i><i>1</i><i>0</i><i>9</i><i>9</i><i>2</i><i>0</i><i>2</i><i>0</i><i>0</i><i>0</i><i>0</i><i>0</i><i>6</i><i>1</i></span></div><div class="bc c3" style="left:242px;width:144px"><span class="cs"><i class="w">F</i><i class="w">K</i><i class="w">D</i><i class="w">J</i><i>0</i><i>3</i><i>0</i><i>1</i><i>0</i><i>9</i><i>9</i><i>2</i><i>0</i><i>2</i><i>0</i><i>0</i><i>0</i><i>0</i><i>0</i><i>6</i><i>1</i></span></div><div class="bc c4" style="left:386px;width:54px"><span class="pn">昆</span></div><div class="bc c5" style="left:440px;width:73px"><span class="ds"><i>2</i><i>0</i><i>2</i><i>0</i><i>&ndash;</i><i>0</i><i>5</i><i>&ndash;</i><i>2</i><i>5</i></span></div><div class="bc c6 qty" style="left:513px;width:80px"><span class="ds"><i>1</i><i>0</i></span></div><div class="bc c7 node" style="left:593px;width:120px">扫描完成</div><div class="bc c8" style="left:713px;width:124px"><span class="ds"><i>2</i><i>0</i><i>2</i><i>0</i><i>&ndash;</i><i>0</i><i>5</i><i>&ndash;</i><i>2</i><i>5</i><i>&nbsp;</i><i>1</i><i>5</i><i>:</i><i>0</i><i>5</i><i>:</i><i>5</i><i>4</i></span></div><div class="bc c9 op" style="left:837px;width:50px"><span class="lk">查看</span></div><div class="bc c10 op" style="left:887px;width:51px"><span class="lk">重扫</span></div></div>
<div class="brow" style="top:280px"><div class="bc c0 num" style="left:0px;width:40px"><span class="ns"><i>1</i><i>4</i></span></div><div class="bc c1" style="left:40px;width:40px"><span class="cb"></span></div><div class="bc c2" style="left:80px;width:162px"><span class="cs"><i class="w">A</i><i>0</i><i>8</i><i class="w">F</i><i class="w">K</i><i class="w">D</i><i class="w">J</i><i>0</i><i>3</i><i>0</i><i>1</i><i>0</i><i>9</i><i>9</i><i>2</i><i>0</i><i>2</i><i>0</i><i>0</i><i>0</i><i>0</i><i>0</i><i>6</i><i>0</i></span></div><div class="bc c3" style="left:242px;width:144px"><span class="cs"><i class="w">F</i><i class="w">K</i><i class="w">D</i><i class="w">J</i><i>0</i><i>3</i><i>0</i><i>1</i><i>0</i><i>9</i><i>9</i><i>2</i><i>0</i><i>2</i><i>0</i><i>0</i><i>0</i><i>0</i><i>0</i><i>6</i><i>0</i></span></div><div class="bc c4" style="left:386px;width:54px"><span class="pn">昆</span></div><div class="bc c5" style="left:440px;width:73px"><span class="ds"><i>2</i><i>0</i><i>2</i><i>0</i><i>&ndash;</i><i>0</i><i>5</i><i>&ndash;</i><i>2</i><i>5</i></span></div><div class="bc c6 qty" style="left:513px;width:80px"><span class="ds"><i>1</i><i>0</i></span></div><div class="bc c7 node" style="left:593px;width:120px">扫描完成</div><div class="bc c8" style="left:713px;width:124px"><span class="ds"><i>2</i><i>0</i><i>2</i><i>0</i><i>&ndash;</i><i>0</i><i>5</i><i>&ndash;</i><i>2</i><i>5</i><i>&nbsp;</i><i>1</i><i>5</i><i>:</i><i>0</i><i>5</i><i>:</i><i>5</i><i>4</i></span></div><div class="bc c9 op" style="left:837px;width:50px"><span class="lk">查看</span></div><div class="bc c10 op" style="left:887px;width:51px"><span class="lk">重扫</span></div></div>
<div class="brow" style="top:300px"><div class="bc c0 num" style="left:0px;width:40px"><span class="ns"><i>1</i><i>5</i></span></div><div class="bc c1" style="left:40px;width:40px"><span class="cb"></span></div><div class="bc c2" style="left:80px;width:162px"><span class="cs"><i class="w">B</i><i>0</i><i>1</i><i class="w">X</i><i class="w">T</i><i class="w">S</i><i class="w">K</i><i class="w">D</i><i class="w">J</i><i>0</i><i>3</i><i>0</i><i>1</i><i>0</i><i>9</i><i>9</i><i>2</i><i>0</i><i>2</i><i>0</i><i>0</i><i>0</i><i>0</i><i>0</i><i>0</i><i>3</i></span></div><div class="bc c3" style="left:242px;width:144px"><span class="cs"><i class="w">X</i><i class="w">T</i><i class="w">S</i><i class="w">K</i><i class="w">D</i><i class="w">J</i><i>0</i><i>3</i><i>0</i><i>1</i><i>0</i><i>9</i><i>9</i><i>2</i><i>0</i><i>2</i><i>0</i><i>0</i><i>0</i><i>0</i><i>0</i><i>0</i><i>3</i></span></div><div class="bc c4" style="left:386px;width:54px"><span class="pn">龄</span></div><div class="bc c5" style="left:440px;width:73px"><span class="ds"><i>2</i><i>0</i><i>2</i><i>0</i><i>&ndash;</i><i>0</i><i>5</i><i>&ndash;</i><i>2</i><i>0</i></span></div><div class="bc c6 qty" style="left:513px;width:80px"><span class="ds"><i>1</i><i>0</i></span></div><div class="bc c7 node" style="left:593px;width:120px">扫描完成</div><div class="bc c8" style="left:713px;width:124px"><span class="ds"><i>2</i><i>0</i><i>2</i><i>0</i><i>&ndash;</i><i>0</i><i>5</i><i>&ndash;</i><i>2</i><i>0</i><i>&nbsp;</i><i>1</i><i>8</i><i>:</i><i>5</i><i>9</i><i>:</i><i>2</i><i>8</i></span></div><div class="bc c9 op" style="left:837px;width:50px"><span class="lk">查看</span></div><div class="bc c10 op" style="left:887px;width:51px"><span class="lk">重扫</span></div></div>
<div class="brow" style="top:320px"><div class="bc c0 num" style="left:0px;width:40px"><span class="ns"><i>1</i><i>6</i></span></div><div class="bc c1" style="left:40px;width:40px"><span class="cb"></span></div><div class="bc c2" style="left:80px;width:162px"><span class="cs"><i class="w">B</i><i>0</i><i>1</i><i class="w">X</i><i class="w">T</i><i class="w">S</i><i class="w">K</i><i class="w">D</i><i class="w">J</i><i>0</i><i>3</i><i>0</i><i>1</i><i>0</i><i>9</i><i>9</i><i>2</i><i>0</i><i>2</i><i>0</i><i>0</i><i>0</i><i>0</i><i>0</i><i>0</i><i>4</i></span></div><div class="bc c3" style="left:242px;width:144px"><span class="cs"><i class="w">X</i><i class="w">T</i><i class="w">S</i><i class="w">K</i><i class="w">D</i><i class="w">J</i><i>0</i><i>3</i><i>0</i><i>1</i><i>0</i><i>9</i><i>9</i><i>2</i><i>0</i><i>2</i><i>0</i><i>0</i><i>0</i><i>0</i><i>0</i><i>0</i><i>4</i></span></div><div class="bc c4" style="left:386px;width:54px"><span class="pn">龄</span></div><div class="bc c5" style="left:440px;width:73px"><span class="ds"><i>2</i><i>0</i><i>2</i><i>0</i><i>&ndash;</i><i>0</i><i>5</i><i>&ndash;</i><i>2</i><i>0</i></span></div><div class="bc c6 qty" style="left:513px;width:80px"><span class="ds"><i>1</i><i>0</i></span></div><div class="bc c7 node" style="left:593px;width:120px">扫描完成</div><div class="bc c8" style="left:713px;width:124px"><span class="ds"><i>2</i><i>0</i><i>2</i><i>0</i><i>&ndash;</i><i>0</i><i>5</i><i>&ndash;</i><i>2</i><i>0</i><i>&nbsp;</i><i>1</i><i>8</i><i>:</i><i>5</i><i>9</i><i>:</i><i>2</i><i>7</i></span></div><div class="bc c9 op" style="left:837px;width:50px"><span class="lk">查看</span></div><div class="bc c10 op" style="left:887px;width:51px"><span class="lk">重扫</span></div></div>
<div class="brow" style="top:340px"><div class="bc c0 num" style="left:0px;width:40px"><span class="ns"><i>1</i><i>7</i></span></div><div class="bc c1" style="left:40px;width:40px"><span class="cb"></span></div><div class="bc c2" style="left:80px;width:162px"><span class="cs"><i class="w">A</i><i>0</i><i>9</i><i class="w">G</i><i class="w">D</i><i class="w">Z</i><i class="w">J</i><i>0</i><i>3</i><i>0</i><i>1</i><i>0</i><i>9</i><i>9</i><i>2</i><i>0</i><i>1</i><i>9</i><i>0</i><i>0</i><i>0</i><i>0</i><i>0</i><i>2</i></span></div><div class="bc c3" style="left:242px;width:144px"><span class="cs"><i class="w">G</i><i class="w">D</i><i class="w">Z</i><i class="w">J</i><i>0</i><i>3</i><i>0</i><i>1</i><i>0</i><i>9</i><i>9</i><i>2</i><i>0</i><i>1</i><i>9</i><i>0</i><i>0</i><i>0</i><i>0</i><i>0</i><i>2</i></span></div><div class="bc c4" style="left:386px;width:54px"><span class="pn"></span></div><div class="bc c5" style="left:440px;width:73px"><span class="ds"><i>2</i><i>0</i><i>1</i><i>9</i><i>&ndash;</i><i>1</i><i>2</i><i>&ndash;</i><i>1</i><i>1</i></span></div><div class="bc c6 qty" style="left:513px;width:80px"><span class="ds"><i>3</i><i>9</i></span></div><div class="bc c7 node" style="left:593px;width:120px">重扫、补扫完成</div><div class="bc c8" style="left:713px;width:124px"><span class="ds"><i>2</i><i>0</i><i>1</i><i>9</i><i>&ndash;</i><i>1</i><i>2</i><i>&ndash;</i><i>2</i><i>2</i><i>&nbsp;</i><i>1</i><i>7</i><i>:</i><i>2</i><i>3</i><i>:</i><i>2</i><i>7</i></span></div><div class="bc c9 op" style="left:837px;width:50px"><span class="lk">查看</span></div><div class="bc c10 op" style="left:887px;width:51px"><span class="lk">重扫</span></div></div>
<div class="brow" style="top:360px"><div class="bc c0 num" style="left:0px;width:40px"><span class="ns"><i>1</i><i>8</i></span></div><div class="bc c1" style="left:40px;width:40px"><span class="cb"></span></div><div class="bc c2" style="left:80px;width:162px"><span class="cs"><i class="w">A</i><i>0</i><i>9</i><i class="w">G</i><i class="w">D</i><i class="w">Z</i><i class="w">J</i><i>0</i><i>3</i><i>0</i><i>1</i><i>0</i><i>9</i><i>9</i><i>2</i><i>0</i><i>1</i><i>9</i><i>0</i><i>0</i><i>0</i><i>0</i><i>0</i><i>1</i></span></div><div class="bc c3" style="left:242px;width:144px"><span class="cs"><i class="w">G</i><i class="w">D</i><i class="w">Z</i><i class="w">J</i><i>0</i><i>3</i><i>0</i><i>1</i><i>0</i><i>9</i><i>9</i><i>2</i><i>0</i><i>1</i><i>9</i><i>0</i><i>0</i><i>0</i><i>0</i><i>0</i><i>1</i></span></div><div class="bc c4" style="left:386px;width:54px"><span class="pn"></span></div><div class="bc c5" style="left:440px;width:73px"><span class="ds"><i>2</i><i>0</i><i>1</i><i>9</i><i>&ndash;</i><i>1</i><i>2</i><i>&ndash;</i><i>1</i><i>1</i></span></div><div class="bc c6 qty" style="left:513px;width:80px"><span class="ds"><i>3</i><i>9</i></span></div><div class="bc c7 node" style="left:593px;width:120px">重扫、补扫完成</div><div class="bc c8" style="left:713px;width:124px"><span class="ds"><i>2</i><i>0</i><i>1</i><i>9</i><i>&ndash;</i><i>1</i><i>2</i><i>&ndash;</i><i>2</i><i>2</i><i>&nbsp;</i><i>1</i><i>7</i><i>:</i><i>0</i><i>8</i><i>:</i><i>0</i><i>8</i></span></div><div class="bc c9 op" style="left:837px;width:50px"><span class="lk">查看</span></div><div class="bc c10 op" style="left:887px;width:51px"><span class="lk">重扫</span></div></div>
</div>

<!-- red boxes -->
<div class="a red" style="left:16px;top:125px;width:174px;height:59px"></div>
<div class="a red" style="left:1326px;top:215px;width:61px;height:398px"></div>
</div></body></html>
